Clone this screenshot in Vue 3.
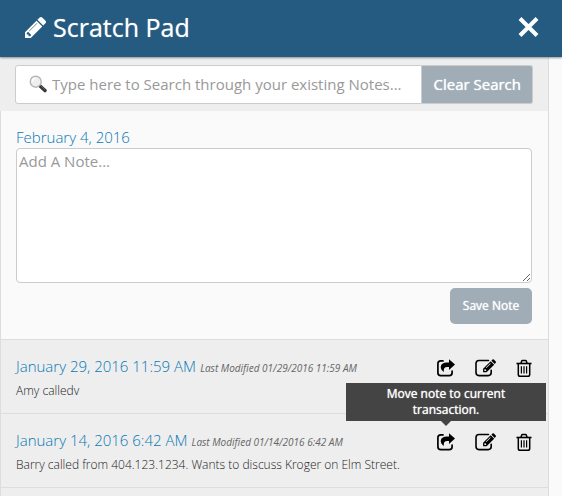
<script setup>
import { ref } from 'vue'

const query = ref('')
const draft = ref('')
const notes = ref([
  { id: 1, date: 'January 29, 2016 11:59 AM', modified: 'Last Modified 01/29/2016 11:59 AM', text: 'Amy calledv', tip: false },
  { id: 2, date: 'January 14, 2016 6:42 AM', modified: 'Last Modified 01/14/2016 6:42 AM', text: 'Barry called from 404.123.1234. Wants to discuss Kroger on Elm Street.', tip: true }
])
</script>

<template>
  <div class="page">
    <header class="header">
      <svg class="pencil" viewBox="128 149 1515 1515" aria-hidden="true">
        <path fill="currentColor" d="M491 1536l91-91-235-235-91 91v107h128v128h107zm523-928q0-22-22-22-10 0-17 7l-542 542q-7 7-7 17 0 22 22 22 10 0 17-7l542-542q7-7 7-17zm-54-192l416 416-832 832h-416v-416zm683 96q0 53-37 90l-166 166-416-416 166-165q36-38 90-38 53 0 91 38l235 234q37 39 37 91z" />
      </svg>
      <h1>Scratch Pad</h1>
      <button class="close" type="button" aria-label="Close">
        <svg viewBox="0 0 20 20" aria-hidden="true">
          <path d="M1.5 1.5 18.5 18.5M18.5 1.5 1.5 18.5" stroke="currentColor" stroke-width="4" />
        </svg>
      </button>
    </header>

    <main class="panel">
      <form class="search" @submit.prevent>
        <label class="field">
          <svg class="lens" viewBox="0 0 18 18" aria-hidden="true">
            <path d="M10.8 10.8 16 15.6" stroke="#333" stroke-width="3.4" stroke-linecap="round" />
            <path d="M11.6 10.7 16.2 14.8" stroke="#777" stroke-width="0.8" />
            <circle cx="6.7" cy="6.7" r="5.5" fill="#eef0f0" stroke="#b5b5b5" stroke-width="1.4" />
            <path d="M3.4 6.5a3.4 3.4 0 0 1 3.3-3.2" fill="none" stroke="#fff" stroke-width="1.4" />
          </svg>
          <input v-model="query" type="text" aria-label="Search notes" placeholder="Type here to Search through your existing Notes...">
        </label>
        <button class="clear" type="button" @click="query = ''">Clear Search</button>
      </form>

      <section class="compose">
        <label class="date" for="draft">February 4, 2016</label>
        <textarea id="draft" v-model="draft" placeholder="Add A Note..."></textarea>
        <button class="save" type="button">Save Note</button>
      </section>

      <ul class="notes">
        <li v-for="note in notes" :key="note.id" class="note">
          <div class="body">
            <p class="heading"><span class="date">{{ note.date }}</span> <em>{{ note.modified }}</em></p>
            <p class="text">{{ note.text }}</p>
          </div>
          <div class="actions">
            <button type="button" aria-label="Move note">
              <svg class="share" viewBox="0 0 19 18" aria-hidden="true">
                <path d="M7 1.9H4.8Q1.9 1.9 1.9 4.8V13.7Q1.9 16.6 4.8 16.6H13.2Q16.1 16.6 16.1 13.7V12" fill="none" stroke="currentColor" stroke-width="1.7" stroke-linecap="round" />
                <path d="M13 .3 19 5.6 13 10.9V8.1H11.2C8.4 8.1 7.4 9.8 7.9 13.1 5.7 11.6 4.4 9.5 4.8 7.3 5.4 4.5 7.8 3.4 10.7 3.4H13Z" fill="currentColor" />
              </svg>
            </button>
            <button type="button" aria-label="Edit note">
              <svg class="edit" viewBox="0 0 21 18" aria-hidden="true">
                <path d="M13.5 1.5H4Q1 1.5 1 4.5V13.6Q1 16.6 4 16.6H13.2Q16.2 16.6 16.2 13.6V11.2" fill="none" stroke="currentColor" stroke-width="1.6" stroke-linecap="round" />
                <path fill-rule="evenodd" d="M15.7 2.3 19.2 5.8 11.6 13.3H8.1V9.8ZM9.4 10.6V12H10.8L11.4 11.3 10.1 10ZM15.2 4.3 10.9 8.6 11.4 9.1 15.7 4.8Z" fill="currentColor" />
                <path d="M16.4 1.7 17.5.6Q18.2-.1 18.9.6L20.7 2.4Q21.4 3.1 20.7 3.8L19.8 4.9Z" fill="currentColor" />
              </svg>
            </button>
            <button type="button" aria-label="Delete note">
              <svg class="trash" viewBox="0 0 16 18" aria-hidden="true" fill="none" stroke="currentColor">
                <path d="M.5 4.5H15.5" stroke-width="1.6" />
                <path d="M5 4.2 5.7 2Q5.9 1.4 6.6 1.4H9.4Q10.1 1.4 10.3 2L11 4.2" stroke-width="1.5" />
                <path d="M2.3 4.5V15.4Q2.3 17.2 4.1 17.2H11.9Q13.7 17.2 13.7 15.4V4.5" stroke-width="1.5" />
                <path d="M5.4 7.3V14.4M8 7.3V14.4M10.6 7.3V14.4" stroke-width="1.2" />
              </svg>
            </button>
            <div v-if="note.tip" class="tooltip" role="tooltip">Move note to current transaction.</div>
          </div>
        </li>
      </ul>
    </main>
  </div>
</template>

<style>
body {
  background: #fafafa;
}
</style>

<style scoped>
.page {
  display: flex;
  flex-direction: column;
  min-height: 100vh;
  overflow: hidden;
  font-family: "Open Sans", "Noto Sans", sans-serif;
  color: #444;
}
.page * {
  box-sizing: border-box;
}
button,
input,
textarea {
  font: inherit;
}
button {
  padding: 0;
  border: 0;
  cursor: pointer;
}
svg {
  display: block;
}
.header {
  position: relative;
  display: flex;
  align-items: center;
  height: 57px;
  padding: 0 23px 3px 25px;
  background: #255b80;
  color: #fff;
  box-shadow: 0 1px 2px rgba(0, 0, 0, 0.4);
}
.pencil {
  width: 21px;
  height: 21px;
}
h1 {
  flex: 1;
  margin: 0 0 0 7px;
  font-size: 25px;
  font-weight: 400;
  line-height: 36px;
  text-shadow: 0 0 1px rgba(255, 255, 255, 0.6);
}
.close {
  background: none;
  color: inherit;
}
.close svg {
  width: 21px;
  height: 20px;
}
.panel {
  flex: 1;
  display: flex;
  flex-direction: column;
  margin-right: 13px;
  background: #eee;
  border-right: 1px solid #ddd;
}
.search {
  display: flex;
  padding: 8px 15px 7px;
}
.field {
  flex: 1;
  display: flex;
  align-items: center;
  gap: 5px;
  height: 39px;
  padding: 0 0 2px 13px;
  background: #fff;
  border: 1px solid #ccc;
  border-radius: 3px 0 0 3px;
}
.lens {
  width: 18px;
  height: 18px;
}
.field input {
  flex: 1;
  min-width: 0;
  padding: 0;
  border: 0;
  outline: 0;
  background: none;
  font-size: 15px;
}
::placeholder {
  color: #999;
  opacity: 1;
}
.clear {
  padding: 0 11px 2px;
  background: #a0adb7;
  border: 1px solid #ccc;
  border-left: 0;
  border-radius: 0 3px 3px 0;
  color: #fff;
  font-size: 15px;
  font-weight: 500;
  text-shadow: 0 0 1px #fff;
}
.compose {
  display: flex;
  flex-direction: column;
  padding: 16px 16px 15px 15px;
  background: #fafafa;
  border-left: 1px solid #ddd;
}
.date {
  color: #0878b4;
  font-size: 15px;
  font-weight: 300;
  line-height: 21px;
}
textarea {
  height: 135px;
  padding: 2px;
  background: #fff;
  border: 1px solid #ccc;
  border-radius: 4px;
  outline: 0;
  font-size: 15px;
  line-height: 21px;
}
.save {
  align-self: flex-end;
  width: 82px;
  height: 36px;
  margin-top: 5px;
  padding-bottom: 1px;
  background: #a0adb7;
  border-radius: 5px;
  color: #fff;
  font-size: 12px;
  font-weight: 500;
  text-shadow: 0 0 1px #fff;
}
.notes {
  flex: 1;
  margin: 0;
  padding: 0;
  list-style: none;
  border-top: 1px solid #ddd;
  border-left: 1px solid #ddd;
}
.note {
  display: flex;
  height: 74px;
  padding: 16px 16px 0 15px;
  border-bottom: 1px solid #ddd;
}
.body {
  flex: 1;
  min-width: 0;
}
.body p {
  margin: 0;
}
.heading {
  line-height: 21px;
  white-space: nowrap;
}
em {
  color: #666;
  font-size: 10px;
  font-weight: 400;
}
.body .text {
  margin-top: 2px;
  color: #222;
  font-size: 12px;
  font-weight: 300;
  line-height: 20px;
  white-space: nowrap;
}
.actions {
  position: relative;
  display: flex;
  align-items: flex-start;
  gap: 20px;
  padding-top: 3px;
}
.actions button {
  background: none;
  color: #000;
}
.share {
  width: 19px;
  height: 18px;
}
.edit {
  width: 21px;
  height: 18px;
}
.trash {
  width: 16px;
  height: 18px;
}
.tooltip {
  position: absolute;
  right: -14px;
  bottom: 66px;
  width: 200px;
  padding: 3px 20px;
  background: #444;
  color: #fff;
  font-size: 12px;
  font-weight: 500;
  line-height: 16px;
  text-align: center;
  text-shadow: 0 0 1px #fff;
}
.tooltip::after {
  content: "";
  position: absolute;
  top: 100%;
  left: 50%;
  margin-left: -5px;
  border: 5px solid transparent;
  border-top-color: #444;
  border-bottom: 0;
}
</style>
